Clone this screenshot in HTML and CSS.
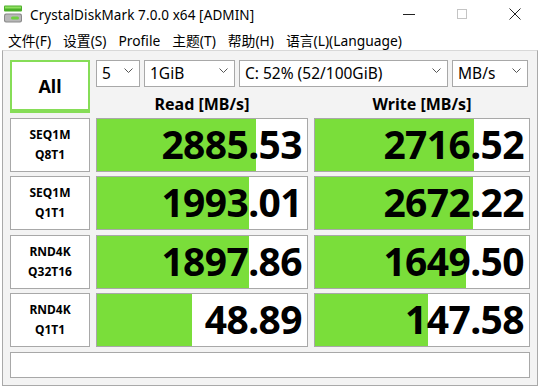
FILE: index.html
```html
<!DOCTYPE html>
<html>
<head>
  <title>CrystalDiskMark 7.0.0 x64 [ADMIN]</title>
  <link rel="stylesheet" href="styles.css">
</head>
<body>
  <div class="titlebar">
    <svg class="app-icon" width="20" height="18" viewBox="0 0 20 18">
      <rect x="1" y="0.5" width="18" height="6" rx="1" fill="#4caf2a"/>
      <rect x="2" y="1.5" width="16" height="2" fill="#8fe060"/>
      <rect x="1" y="8.5" width="18" height="9" rx="2" fill="#8a8a8a"/>
      <rect x="2" y="9.5" width="16" height="7" rx="1.5" fill="#b8b8b8"/>
      <rect x="8" y="11.5" width="8" height="3" rx="1.5" fill="#6fd040"/>
    </svg>
    <span class="title">CrystalDiskMark 7.0.0 x64 [ADMIN]</span>
    <div class="controls">
      <svg width="14" height="14" viewBox="0 0 14 14"><line x1="1" y1="7.5" x2="13" y2="7.5" stroke="#222" stroke-width="1"/></svg>
      <svg width="14" height="14" viewBox="0 0 14 14"><rect x="2.5" y="2.5" width="9" height="9" fill="none" stroke="#c4c4c4" stroke-width="1"/></svg>
      <svg width="14" height="14" viewBox="0 0 14 14"><path d="M1.5 1.5 L12.5 12.5 M12.5 1.5 L1.5 12.5" stroke="#222" stroke-width="1"/></svg>
    </div>
  </div>

  <div class="menubar">
    <span>文件(F)</span>
    <span>设置(S)</span>
    <span>Profile</span>
    <span>主题(T)</span>
    <span>帮助(H)</span>
    <span>语言(L)(Language)</span>
  </div>

  <div class="window">
    <div class="board">
      <button class="all-btn">All</button>
      <div class="selects">
        <div class="combo c-count"><span>5</span><svg class="chev" width="9" height="6" viewBox="0 0 9 6"><polyline points="0.5,0.5 4.5,4.5 8.5,0.5" fill="none" stroke="#555" stroke-width="1"/></svg></div>
        <div class="combo c-size"><span>1GiB</span><svg class="chev" width="9" height="6" viewBox="0 0 9 6"><polyline points="0.5,0.5 4.5,4.5 8.5,0.5" fill="none" stroke="#555" stroke-width="1"/></svg></div>
        <div class="combo c-drive"><span>C: 52% (52/100GiB)</span><svg class="chev" width="9" height="6" viewBox="0 0 9 6"><polyline points="0.5,0.5 4.5,4.5 8.5,0.5" fill="none" stroke="#555" stroke-width="1"/></svg></div>
        <div class="combo c-unit"><span>MB/s</span><svg class="chev" width="9" height="6" viewBox="0 0 9 6"><polyline points="0.5,0.5 4.5,4.5 8.5,0.5" fill="none" stroke="#555" stroke-width="1"/></svg></div>
      </div>
      <div class="head">Read [MB/s]</div>
      <div class="head">Write [MB/s]</div>

      <div class="label">SEQ1M<br>Q8T1</div>
      <div class="cell"><div class="bar" style="width: 159px"></div><span>2885.53</span></div>
      <div class="cell"><div class="bar" style="width: 159px"></div><span>2716.52</span></div>

      <div class="label">SEQ1M<br>Q1T1</div>
      <div class="cell"><div class="bar" style="width: 152px"></div><span>1993.01</span></div>
      <div class="cell"><div class="bar" style="width: 158px"></div><span>2672.22</span></div>

      <div class="label">RND4K<br>Q32T16</div>
      <div class="cell"><div class="bar" style="width: 152px"></div><span>1897.86</span></div>
      <div class="cell"><div class="bar" style="width: 151px"></div><span>1649.50</span></div>

      <div class="label">RND4K<br>Q1T1</div>
      <div class="cell"><div class="bar" style="width: 95px"></div><span>48.89</span></div>
      <div class="cell"><div class="bar" style="width: 113px"></div><span>147.58</span></div>
    </div>
    <div class="comment"></div>
  </div>
</body>
</html>
```

FILE: styles.css
```css
html, body {
  margin: 0;
  padding: 0;
}

body {
  width: 540px;
  height: 388px;
  background: #ffffff;
  font-family: "Noto Sans", "Noto Sans CJK SC", sans-serif;
  color: #000;
  overflow: hidden;
}

.titlebar {
  height: 30px;
  display: flex;
  align-items: center;
  padding-left: 3px;
}

.app-icon {
  margin-right: 7px;
  margin-top: -2px;
}

.title {
  font-size: 13.5px;
  letter-spacing: 0.1px;
}

.controls {
  margin-left: auto;
  display: flex;
  gap: 39px;
  padding-right: 18px;
  margin-top: -2px;
}

.menubar {
  height: 20px;
  display: flex;
  align-items: center;
  gap: 12px;
  padding-left: 8px;
  font-size: 13.8px;
}

.window {
  height: 336px;
  margin: 0 2px;
  border: 1px solid #a9a9a9;
  border-top: 1px solid #d8d8d8;
  background: #f3f3f3;
  box-sizing: border-box;
  padding: 9px 7px 0 7px;
}

.board {
  display: grid;
  grid-template-columns: 80px 212px 216px;
  grid-template-rows: 27px 21.5px repeat(4, 54px);
  column-gap: 6px;
  row-gap: 4.5px;
}

.all-btn {
  grid-row: 1 / 3;
  margin: 0;
  border: 2px solid #86dd57;
  border-bottom-width: 4px;
  background: #fff;
  font-family: "Noto Sans", sans-serif;
  font-weight: bold;
  font-size: 18px;
  padding-top: 2px;
}

.selects {
  grid-column: 2 / 4;
  display: flex;
  gap: 4px;
}

.combo {
  height: 27px;
  box-sizing: border-box;
  border: 1px solid #a8a8a8;
  background: #fff;
  display: flex;
  align-items: center;
  padding: 0 6px 1px 5px;
  font-size: 15.5px;
  justify-content: space-between;
}

.combo .chev {
  margin-top: -4px;
}

.c-count { width: 44px; }
.c-size { width: 91px; }
.c-drive { width: 209px; }
.c-unit { width: 76px; }

.head {
  font-weight: bold;
  font-size: 16px;
  text-align: center;
  line-height: 20px;
  padding-top: 2px;
}

.label {
  border: 1px solid #a8a8a8;
  background: #fff;
  font-weight: bold;
  font-size: 12px;
  line-height: 20px;
  display: flex;
  align-items: center;
  justify-content: center;
  text-align: center;
}

.cell {
  position: relative;
  border: 1px solid #a8a8a8;
  background: #fff;
  display: flex;
  align-items: center;
  justify-content: flex-end;
  padding-right: 5px;
}

.bar {
  position: absolute;
  left: 0;
  top: 0;
  bottom: 0;
  background: #7ade3a;
}

.cell span {
  position: relative;
  font-weight: bold;
  font-size: 39px;
  letter-spacing: -0.6px;
  line-height: 1;
  padding-bottom: 3px;
}

.comment {
  margin-top: 5px;
  height: 26px;
  box-sizing: border-box;
  border: 1px solid #a8a8a8;
  background: #fff;
}
```
